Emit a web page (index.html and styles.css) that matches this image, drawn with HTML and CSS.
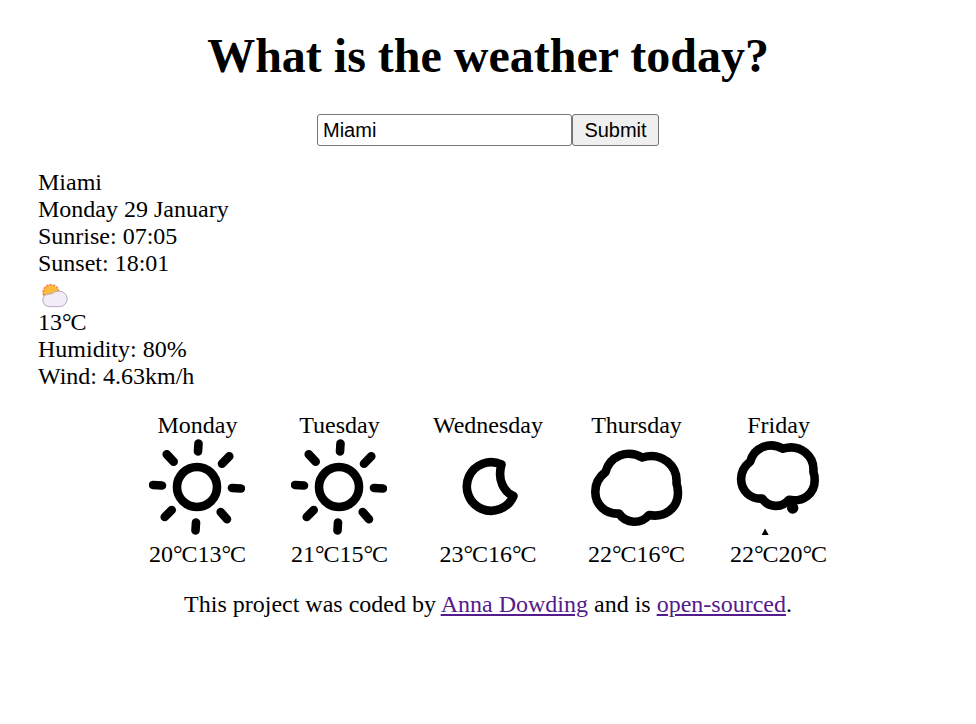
FILE: index.html
```html
<!DOCTYPE html>
<html lang="en">
<head>
<meta charset="utf-8">
<title>Weather</title>
<link rel="stylesheet" href="styles.css">
</head>
<body>
<h1>What is the weather today?</h1>
<form class="search"><input class="city" type="text" value="Miami"><button class="submit" type="button">Submit</button></form>
<ul class="current">
<li>Miami</li>
<li>Monday 29 January</li>
<li>Sunrise: 07:05</li>
<li>Sunset: 18:01</li>
<li class="icon-row"><svg class="now" viewBox="0 0 32 32"><circle class="rays" cx="13" cy="15.500" r="7.300"/><circle cx="13" cy="15.500" r="6.900" fill="#fbbb3c"/><path d="M10.700 29.600A6.500 6.500 0 0 1 7 18.200C9 16.800 12.200 17.600 14.500 16.400C17 14 20 14.200 21.500 14.200A7.600 7.600 0 0 1 21.500 29.600z" fill="#f2edf8" stroke="#b3a9c1"/></svg></li>
<li class="temp">13<span class="degree">°</span>C</li>
<li>Humidity: 80%</li>
<li>Wind: 4.63km/h</li>
</ul>
<div class="forecast">
<div class="day"><span>Monday</span><svg viewBox="0 0 96 96"><g class="line"><circle cx="48" cy="48" r="20"/><path d="M49.500 4.500L49 12.500M4 46L13 46.500M83 49L92 49.500M47 83.500L46.500 91.500M17.700 15.300L24.700 22.700M80.300 17.300L73 24.700M22.700 71L15.700 78M71.700 73L78 80.300"/></g></svg><span class="temp">20<span class="degree">°</span>C13<span class="degree">°</span>C</span></div>
<div class="day"><span>Tuesday</span><svg viewBox="0 0 96 96"><g class="line"><circle cx="48" cy="48" r="20"/><path d="M49.500 4.500L49 12.500M4 46L13 46.500M83 49L92 49.500M47 83.500L46.500 91.500M17.700 15.300L24.700 22.700M80.300 17.300L73 24.700M22.700 71L15.700 78M71.700 73L78 80.300"/></g></svg><span class="temp">21<span class="degree">°</span>C15<span class="degree">°</span>C</span></div>
<div class="day"><span>Wednesday</span><svg viewBox="0 0 96 96"><path class="line" d="M61.500 25.500A24.300 24.300 0 1 0 73.500 57C64 53 57 41 61.500 25.500z"/></svg><span class="temp">23<span class="degree">°</span>C16<span class="degree">°</span>C</span></div>
<div class="day"><span>Thursday</span><svg viewBox="0 0 96 96"><path class="line" d="M53.300 18.500C38 10 21 17 16.500 33C10 38 6.300 45 6.300 52.700C6.300 66 17 75.500 30 74.500C37 85 52 85.500 60 76C76 79 89 69 89 54C89 50 88.500 47 87.500 44.500C89 27 73 12.500 53.300 18.500z"/></svg><span class="temp">22<span class="degree">°</span>C16<span class="degree">°</span>C</span></div>
<div class="day"><span>Friday</span><svg viewBox="0 0 96 96"><path class="line" transform="translate(4.500 -6.800) scale(.89)" d="M53.300 18.500C38 10 21 17 16.500 33C10 38 6.300 45 6.300 52.700C6.300 66 17 75.500 30 74.500C37 85 52 85.500 60 76C76 79 89 69 89 54C89 50 88.500 47 87.500 44.500C89 27 73 12.500 53.300 18.500z"/><circle cx="61.700" cy="69" r="5.700"/><path d="M30.700 96L34 89.500L37.700 96z"/></svg><span class="temp">22<span class="degree">°</span>C20<span class="degree">°</span>C</span></div>
</div>
<footer>This project was coded by <a href="#author">Anna Dowding</a> and is <a href="#source">open-sourced</a>.</footer>
</body>
</html>
```
FILE: styles.css
```css
body { margin: 0; font: 24px/27px "Liberation Serif", serif; color: #000; background: #fff; }
h1 { margin: 28px 0 31px; font-size: 48px; line-height: 55px; text-align: center; }
.search { display: flex; justify-content: center; height: 32px; }
.city, .submit { box-sizing: border-box; font: 20px "Liberation Sans", sans-serif; border: 1px solid #767676; border-radius: 3px; color: #000; }
.city { width: 255px; padding: 1px 5px; }
.submit { width: 87px; padding: 0; background: #efefef; }
.current { list-style: none; margin: 23px 38px 22px; padding: 0; }
.icon-row { height: 32px; }
.now { display: block; width: 32px; height: 32px; }
.rays { fill: #fbbb3c; stroke: #f5873c; stroke-width: 2.6; stroke-dasharray: 2.4 0.87; }
.forecast { display: flex; justify-content: center; gap: 45px; }
.day { display: flex; flex-direction: column; align-items: center; min-width: 97px; }
.day svg { width: 96px; height: 96px; margin-bottom: 6px; }
.degree { letter-spacing: -1.1px; }
.line { fill: none; stroke: #000; stroke-width: 8.6; stroke-linecap: round; stroke-linejoin: round; vector-effect: non-scaling-stroke; }
footer { margin-top: 23px; text-align: center; }
a { color: #551a8b; }
```
